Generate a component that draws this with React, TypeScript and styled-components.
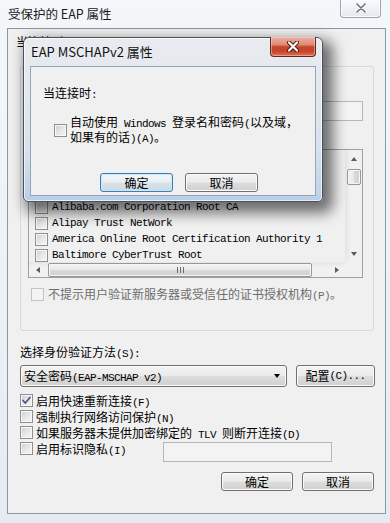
import React from 'react';
import styled, { createGlobalStyle, css } from 'styled-components';

const Global = createGlobalStyle`
  html, body { margin: 0; padding: 0; width: 390px; height: 523px; overflow: hidden; }
  body {
    background: #e8eef5;
    font-family: "Noto Sans CJK SC", "Noto Sans", sans-serif;
    font-size: 12px;
    color: #000;
  }
  * { box-sizing: border-box; }
`;

const Window = styled.div`
  position: relative;
  width: 390px;
  height: 523px;
  padding: 0 4px 9px 7px;
  display: flex;
  flex-direction: column;
  background: linear-gradient(180deg, #f4f7fa 0%, #edf1f6 55%, #e4ebf3 100%);
  overflow: hidden;
`;

const TitleBar = styled.div`
  height: 28px;
  flex: none;
  display: flex;
  justify-content: space-between;
  align-items: flex-start;
`;

const Title = styled.div`
  padding-left: 1px;
  line-height: 28px;
  font-size: 12.5px;
  color: #1a1a1a;
`;

const OuterClose = styled.div`
  width: 41px;
  height: 19px;
  margin-top: -1px;
  margin-right: 5px;
  border: 1px solid #9aa4b2;
  border-top: none;
  border-radius: 0 0 4px 4px;
  background: linear-gradient(180deg, #fbfcfd 0%, #eef2f6 50%, #e3e9ef 100%);
  box-shadow: inset 0 0 0 1px rgba(255, 255, 255, 0.8);
  display: flex;
  align-items: center;
  justify-content: center;
`;

const Client = styled.div`
  flex: 1;
  border: 1px solid #8c97a5;
  background: #f0f0f0;
  padding: 6px 10px 0 8px;
  display: flex;
  flex-direction: column;
`;

const Text = styled.div<{ $disabled?: boolean }>`
  line-height: 14px;
  min-height: 14px;
  white-space: nowrap;
  color: ${p => (p.$disabled ? '#6d6d6d' : '#000')};
`;

const Lat = styled.span`
  font-family: "Liberation Mono", monospace;
  font-size: 11px;
  letter-spacing: -0.6px;
  line-height: 1;
  white-space: pre;
`;

const Group = styled.div`
  margin: 16px 1px 0 4px;
  height: 265px;
  border: 1px solid #d3dbe2;
  border-radius: 3px;
  padding: 6px 10px 0 10px;
  display: flex;
  flex-direction: column;
`;

const CheckRow = styled.div<{ $gap?: number; $top?: number; $indent?: number }>`
  display: flex;
  align-items: center;
  gap: ${p => p.$gap ?? 3}px;
  min-height: 14px;
  margin-top: ${p => p.$top ?? 0}px;
  margin-left: ${p => p.$indent ?? 0}px;
  white-space: nowrap;
`;

const Box = styled.span<{ $disabled?: boolean }>`
  flex: none;
  width: 13px;
  height: 13px;
  border: 1px solid ${p => (p.$disabled ? '#c4c4c4' : '#8e8f8f')};
  ${p =>
    p.$disabled
      ? css`
          background: #f4f4f4;
        `
      : css`
          background: linear-gradient(135deg, #c9cdd2 0%, #e3e4e6 45%, #f8f8f8 100%);
          box-shadow: inset 0 0 0 1px #f7f7f7;
        `}
  display: flex;
  align-items: center;
  justify-content: center;
`;

const Field = styled.div<{ $w?: number; $shift?: number }>`
  height: 20px;
  border: 1px solid #b4b8bd;
  background: #f3f3f3;
  margin-left: ${p => p.$shift ?? 0}px;
  ${p => (p.$w ? `width: ${p.$w}px;` : '')}
`;

const ListBox = styled.div`
  margin: 6px 0 0 -3px;
  height: 129px;
  border: 1px solid #9aa0a8;
  background: #f0f0f0;
  display: grid;
  grid-template-columns: 1fr 17px;
  grid-template-rows: 1fr 15px;
`;

const ListItems = styled.div`
  overflow: hidden;
  padding-top: 1px;
`;

const ListRow = styled.div`
  height: 16px;
  display: flex;
  align-items: center;
  gap: 4px;
  padding-left: 6px;
  white-space: nowrap;
  font-family: "Liberation Mono", monospace;
  font-size: 11px;
  letter-spacing: -0.6px;
`;

const VScroll = styled.div`
  display: flex;
  flex-direction: column;
  align-items: center;
  background: linear-gradient(90deg, #e6e6e6 0%, #f2f2f2 40%, #f0f0f0 100%);
`;

const HScroll = styled.div`
  display: flex;
  align-items: center;
  background: linear-gradient(180deg, #e6e6e6 0%, #f2f2f2 40%, #f0f0f0 100%);
`;

const Corner = styled.div`
  background: #f0f0f0;
`;

const ArrowCell = styled.div<{ $h?: boolean }>`
  flex: none;
  width: 17px;
  height: ${p => (p.$h ? 15 : 17)}px;
  display: flex;
  align-items: center;
  justify-content: center;
`;

const Tri = styled.span<{ $dir: 'up' | 'down' | 'left' | 'right'; $dark?: boolean }>`
  width: 0;
  height: 0;
  ${p => {
    const c = p.$dark ? '#000' : '#5a5a5a';
    return p.$dir === 'up'
      ? `border-left: 3.5px solid transparent; border-right: 3.5px solid transparent; border-bottom: 4px solid ${c};`
      : p.$dir === 'down'
      ? `border-left: 3.5px solid transparent; border-right: 3.5px solid transparent; border-top: 4px solid ${c};`
      : p.$dir === 'left'
      ? `border-top: 3.5px solid transparent; border-bottom: 3.5px solid transparent; border-right: 4px solid ${c};`
      : `border-top: 3.5px solid transparent; border-bottom: 3.5px solid transparent; border-left: 4px solid ${c};`;
  }}
`;

const Thumb = styled.div<{ $h?: boolean }>`
  flex: none;
  border: 1px solid #979797;
  border-radius: 2px;
  box-shadow: inset 0 0 0 1px #f6f6f6;
  display: flex;
  align-items: center;
  justify-content: center;
  ${p =>
    p.$h
      ? css`
          width: 264px;
          height: 14px;
          margin-left: 2px;
          background: linear-gradient(180deg, #f3f3f3 0%, #e8e8e8 50%, #d9d9d9 51%, #d0d0d0 100%);
        `
      : css`
          width: 14px;
          height: 16px;
          margin-top: 2px;
          background: linear-gradient(90deg, #f3f3f3 0%, #e8e8e8 50%, #d9d9d9 51%, #d0d0d0 100%);
        `}
`;

const Grip = styled.span`
  width: 7px;
  height: 6px;
  background: repeating-linear-gradient(90deg, #6d6d6d 0 1px, transparent 1px 3px);
`;

const Spacer = styled.div`
  flex: 1;
`;

const Section = styled.div<{ $top?: number }>`
  margin: ${p => p.$top ?? 0}px 0 0 4px;
  display: flex;
  flex-direction: column;
`;

const ComboRow = styled.div`
  margin: 5px 0 0 4px;
  height: 22px;
  display: flex;
  gap: 9px;
`;

const buttonLook = css`
  border: 1px solid #707070;
  border-radius: 3px;
  background: linear-gradient(180deg, #f3f3f3 0%, #ebebeb 48%, #dddddd 52%, #cfcfcf 100%);
  box-shadow: inset 0 0 0 1px #fbfbfb;
`;

const Combo = styled.div`
  ${buttonLook};
  width: 267px;
  display: flex;
  align-items: center;
  padding: 0 6px 0 3px;
  white-space: nowrap;
`;

const ComboText = styled.span`
  flex: 1;
  line-height: 14px;
`;

const Button = styled.div<{ $w?: number; $default?: boolean }>`
  ${buttonLook};
  width: ${p => p.$w ?? 72}px;
  height: 19px;
  display: flex;
  align-items: center;
  justify-content: center;
  line-height: 14px;
  white-space: nowrap;
  ${p =>
    p.$default &&
    css`
      border-color: #3c7fb1;
      box-shadow: inset 0 0 0 1px #c8e7f8;
      background: linear-gradient(180deg, #f1f6f9 0%, #e8eff4 48%, #d9e3ea 52%, #cdd8e0 100%);
    `}
`;

const BigButton = styled(Button)`
  height: 22px;
`;

const Checks = styled.div`
  margin: 5px 0 0 4px;
  display: flex;
  flex-direction: column;
`;

const OptRow = styled.div`
  height: 16px;
  display: flex;
  align-items: center;
  gap: 3px;
  white-space: nowrap;
`;

const FieldRow = styled.div`
  display: flex;
  align-items: flex-start;
`;

const FieldLabel = styled(OptRow)`
  width: 143px;
`;

const FieldSlot = styled.div`
  margin-top: 2px;
`;

const ButtonRow = styled.div<{ $top: number; $left?: number; $gap: number; $end?: boolean }>`
  display: flex;
  gap: ${p => p.$gap}px;
  margin-top: ${p => p.$top}px;
  padding-left: ${p => p.$left ?? 0}px;
  justify-content: ${p => (p.$end ? 'flex-end' : 'flex-start')};
  margin-right: ${p => (p.$end ? 1 : 0)}px;
`;

/* ---------- inner modal dialog ---------- */

const Dialog = styled.div`
  position: absolute;
  left: 23px;
  top: 37px;
  width: 300px;
  height: 165px;
  border: 1px solid #48525e;
  border-radius: 6px 6px 5px 5px;
  background: linear-gradient(180deg, #e8ecf1 0%, #e3e8ee 35%, #d6e1ec 70%, #b9cfe8 100%);
  box-shadow: inset 0 0 0 1px rgba(255, 255, 255, 0.65), 6px 7px 14px 4px rgba(0, 0, 0, 0.55);
  display: flex;
  flex-direction: column;
  padding: 0 6px 5px 6px;
`;

const DialogTitle = styled.div`
  height: 28px;
  flex: none;
  line-height: 28px;
  padding-left: 1px;
  font-size: 13px;
  color: #111;
`;

const RedClose = styled.div`
  position: absolute;
  top: -1px;
  right: 6px;
  width: 46px;
  height: 20px;
  border: 1px solid #5b2b22;
  border-top: none;
  border-radius: 0 0 4px 4px;
  background: linear-gradient(180deg, #eab2a4 0%, #de8a75 40%, #c7452b 52%, #c6442a 75%, #dc7252 100%);
  box-shadow: inset 0 0 0 1px rgba(255, 220, 210, 0.45);
  display: flex;
  align-items: center;
  justify-content: center;
`;

const DialogClient = styled.div`
  flex: 1;
  border: 1px solid #98a5b4;
  background: #f0f0f0;
  padding: 19px 0 0 12px;
  display: flex;
  flex-direction: column;
`;

const TwoLine = styled.div`
  line-height: 14px;
  white-space: nowrap;
`;

const CheckMark = () => (
  <svg width="11" height="11" viewBox="0 0 11 11">
    <path d="M2 5.5 L4.3 8 L9 2.5" fill="none" stroke="#46597f" strokeWidth="1.7" strokeLinecap="round" strokeLinejoin="round" />
  </svg>
);

/* rows above "Alibaba" are scrolled under the modal and never visible */
const certs: { name?: string; id: string }[] = [
  { id: 'r0' },
  { id: 'r1' },
  { id: 'r2' },
  { id: 'r3', name: 'Alibaba.com Corporation Root CA' },
  { id: 'r4', name: 'Alipay Trust NetWork' },
  { id: 'r5', name: 'America Online Root Certification Authority 1' },
  { id: 'r6', name: 'Baltimore CyberTrust Root' },
];

export default function App() {
  return (
    <>
      <Global />
      <Window>
        <TitleBar>
          <Title>受保护的 EAP 属性</Title>
          <OuterClose>
            <svg width="12" height="10" viewBox="0 0 12 10">
              <path d="M2 1 L10 9 M10 1 L2 9" stroke="#ffffff" strokeWidth="3.4" strokeLinecap="round" />
              <path d="M2 1 L10 9 M10 1 L2 9" stroke="#6f7782" strokeWidth="1.7" strokeLinecap="round" />
            </svg>
          </OuterClose>
        </TitleBar>

        <Client>
          <Text>
            当连接时<Lat>:</Lat>
          </Text>

          <Group>
            <CheckRow>
              <Box>
                <CheckMark />
              </Box>
            </CheckRow>
            <CheckRow>
              <Box />
            </CheckRow>
            <Field $shift={-3} />
            <Text style={{ marginTop: 8 }} />
            <ListBox>
              <ListItems>
                {certs.map(c => (
                  <ListRow key={c.id}>
                    <Box />
                    {c.name && <span>{c.name}</span>}
                  </ListRow>
                ))}
              </ListItems>
              <VScroll>
                <ArrowCell>
                  <Tri $dir="up" />
                </ArrowCell>
                <Thumb />
                <Spacer />
                <ArrowCell>
                  <Tri $dir="down" />
                </ArrowCell>
              </VScroll>
              <HScroll>
                <ArrowCell $h>
                  <Tri $dir="left" />
                </ArrowCell>
                <Thumb $h>
                  <Grip />
                </Thumb>
                <Spacer />
                <ArrowCell $h>
                  <Tri $dir="right" />
                </ArrowCell>
              </HScroll>
              <Corner />
            </ListBox>
            <CheckRow $top={9} $gap={4}>
              <Box $disabled />
              <Text $disabled>
                不提示用户验证新服务器或受信任的证书授权机构<Lat>(P)</Lat>。
              </Text>
            </CheckRow>
          </Group>

          <Section $top={14}>
            <Text>
              选择身份验证方法<Lat>(S):</Lat>
            </Text>
          </Section>

          <ComboRow>
            <Combo>
              <ComboText>
                安全密码<Lat>(EAP-MSCHAP v2)</Lat>
              </ComboText>
              <Tri $dir="down" $dark />
            </Combo>
            <BigButton $w={79}>
              配置<Lat>(C)...</Lat>
            </BigButton>
          </ComboRow>

          <Checks>
            <OptRow>
              <Box>
                <CheckMark />
              </Box>
              <span>
                启用快速重新连接<Lat>(F)</Lat>
              </span>
            </OptRow>
            <OptRow>
              <Box />
              <span>
                强制执行网络访问保护<Lat>(N)</Lat>
              </span>
            </OptRow>
            <OptRow>
              <Box />
              <span>
                如果服务器未提供加密绑定的<Lat> TLV </Lat>则断开连接<Lat>(D)</Lat>
              </span>
            </OptRow>
            <FieldRow>
              <FieldLabel>
                <Box />
                <span>
                  启用标识隐私<Lat>(I)</Lat>
                </span>
              </FieldLabel>
              <FieldSlot>
                <Field $w={169} />
              </FieldSlot>
            </FieldRow>
          </Checks>

          <ButtonRow $top={10} $gap={9} $end>
            <Button $w={72}>确定</Button>
            <Button $w={72}>取消</Button>
          </ButtonRow>
        </Client>

        <Dialog>
          <DialogTitle>EAP MSCHAPv2 属性</DialogTitle>
          <RedClose>
            <svg width="14" height="11" viewBox="0 0 14 11">
              <path d="M3 1.5 L11 9.5 M11 1.5 L3 9.5" stroke="#4a1a12" strokeWidth="4" strokeLinecap="round" />
              <path d="M3 1.5 L11 9.5 M11 1.5 L3 9.5" stroke="#ffffff" strokeWidth="2.2" strokeLinecap="round" />
            </svg>
          </RedClose>
          <DialogClient>
            <Text>
              当连接时<Lat>:</Lat>
            </Text>
            <CheckRow $top={14} $indent={11} $gap={3}>
              <Box />
              <TwoLine>
                自动使用<Lat> Windows </Lat>登录名和密码<Lat>(</Lat>以及域，
                <br />
                如果有的话<Lat>)(A)</Lat>。
              </TwoLine>
            </CheckRow>
            <ButtonRow $top={28} $left={57} $gap={12}>
              <Button $w={73} $default>
                确定
              </Button>
              <Button $w={73}>取消</Button>
            </ButtonRow>
          </DialogClient>
        </Dialog>
      </Window>
    </>
  );
}
